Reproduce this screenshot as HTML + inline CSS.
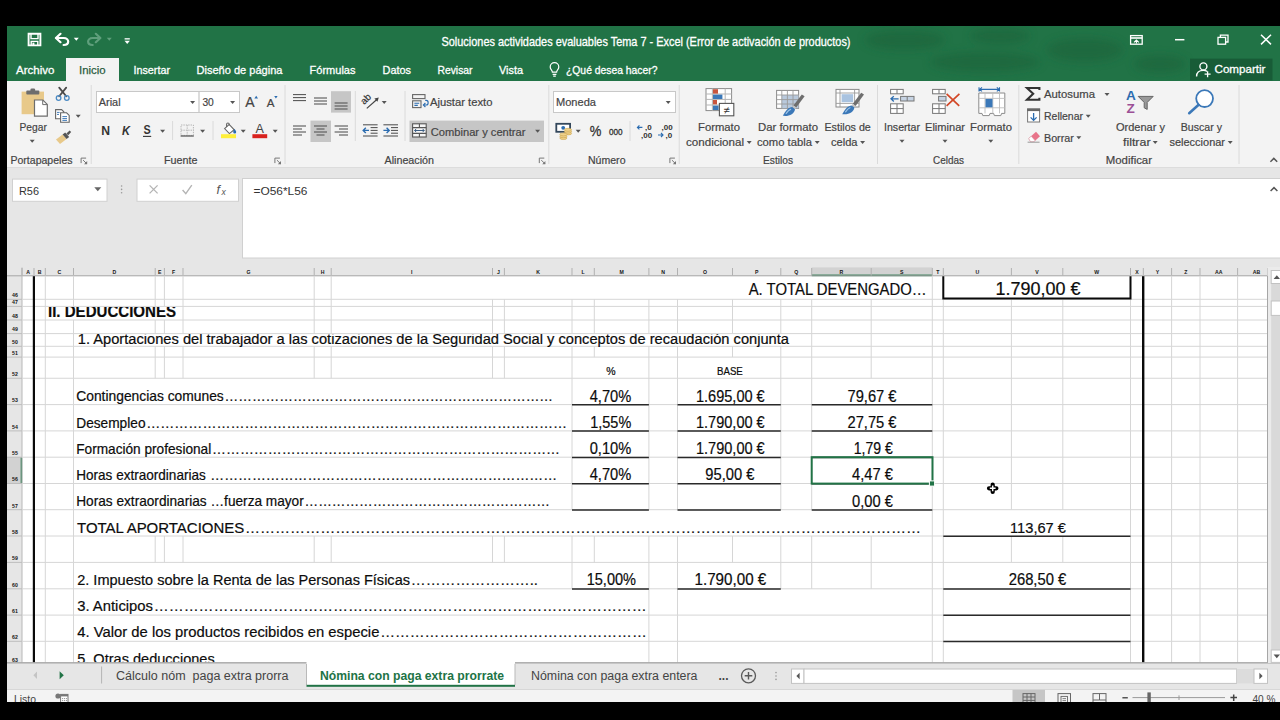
<!DOCTYPE html>
<html lang="es"><head><meta charset="utf-8"><title>Soluciones actividades evaluables Tema 7 - Excel</title>
<style>
html,body{margin:0;padding:0;background:#000;width:1280px;height:720px;overflow:hidden}
body{font-family:"Liberation Sans","DejaVu Sans",sans-serif;position:relative}
#app{position:absolute;left:0;top:0;width:1280px;height:720px;overflow:hidden}
#app>div{position:absolute;overflow:hidden}
svg text{font-family:"Liberation Sans","DejaVu Sans",sans-serif;white-space:pre}
#titlebar{left:7px;top:26px;width:1273px;height:55px;background:#217346}
#ribbon{left:7px;top:81px;width:1273px;height:87px;background:#f3f3f3}
#formulabar{left:7px;top:168px;width:1273px;height:99px;background:#e6e6e6}
#sheet{left:7px;top:267px;width:1273px;height:396px;background:#fff}
#tabsbar{left:7px;top:663px;width:1273px;height:26px;background:#e6e6e6}
#statusbar{left:7px;top:689px;width:1273px;height:13px;background:#f3f3f3}
</style></head>
<body>
<div id="app">
<div id="titlebar"><svg width="1273" height="55" viewBox="7 26 1273 55" style="position:absolute;left:0;top:0;display:block">
<defs><filter id="bl" x="-20%" y="-50%" width="140%" height="200%"><feGaussianBlur stdDeviation="4"/></filter></defs><g fill="#1b633b" opacity="0.6" filter="url(#bl)"><ellipse cx="905" cy="40" rx="40" ry="10"/><ellipse cx="1000" cy="36" rx="30" ry="8"/><ellipse cx="985" cy="62" rx="55" ry="10"/><ellipse cx="1085" cy="50" rx="38" ry="12"/><ellipse cx="1160" cy="64" rx="26" ry="9"/></g>
<rect x="66" y="58" width="53" height="23.5" fill="#f3f3f3"/>
<g fill="none" stroke="#fff" stroke-width="1.9"><path d="M28.6 33.8h11.8v11.6h-11.8z"/><path d="M31 34v4.6h7v-4.6" stroke-width="1.4"/><path d="M31.2 45v-3.6h6.6v3.6" stroke-width="1.4"/></g>
<rect x="32.4" y="42.6" width="2" height="2.6" fill="#fff"/>
<g fill="none" stroke="#fff" stroke-width="2.2" stroke-linecap="round" stroke-linejoin="round"><path d="M60.5 33.8l-4.6 4.2 4.6 4.2"/><path d="M56.4 38h7.2c3.2 0 4.6 2 4.6 3.6 0 2-1.8 3.4-4.6 3.4"/></g>
<path d="M73.8 37.7h5l-2.5 3z" fill="#fff"/>
<g fill="none" stroke="#5f9f7c" stroke-width="2.2" stroke-linecap="round" stroke-linejoin="round"><path d="M95.8 33.8l4.6 4.2-4.6 4.2"/><path d="M99.9 38h-7.2c-3.2 0-4.6 2-4.6 3.6 0 2 1.8 3.4 4.6 3.4"/></g>
<path d="M106.8 37.7h5l-2.5 3z" fill="#5f9f7c"/>
<rect x="124.6" y="38.2" width="5.2" height="1.3" fill="#fff"/>
<path d="M124.5 40.7h5.4l-2.7 3.2z" fill="#fff"/>
<text x="441.5" y="46" font-size="12.2" textLength="409" lengthAdjust="spacingAndGlyphs" fill="#fff" stroke="#fff" stroke-width="0.3">Soluciones actividades evaluables Tema 7 - Excel (Error de activación de productos)</text>
<g fill="none" stroke="#fff" stroke-width="1.3"><rect x="1130.6" y="35.6" width="11.6" height="8.6"/><path d="M1130.6 38h11.6" stroke-width="1.6"/><path d="M1134 42.4l2.4-2.4 2.4 2.4M1136.4 40v3.6" stroke-width="1.1"/><path d="M1175 39.7h9.4" stroke-width="1.5"/><rect x="1218" y="37.4" width="7.6" height="6.8"/><path d="M1220.4 37.4v-2.2h7.6v6.8h-2.4"/><path d="M1261 34.8l10 9.6M1271 34.8l-10 9.6" stroke-width="1.5"/></g>
<text x="16" y="73.6" font-size="11.8" textLength="38.4" lengthAdjust="spacingAndGlyphs" fill="#fff" stroke="#fff" stroke-width="0.3">Archivo</text>
<text x="79" y="73.6" font-size="11.8" textLength="26.6" lengthAdjust="spacingAndGlyphs" fill="#2a5c40" stroke="#2a5c40" stroke-width="0.25">Inicio</text>
<text x="133.5" y="73.6" font-size="11.8" textLength="36.5" lengthAdjust="spacingAndGlyphs" fill="#fff" stroke="#fff" stroke-width="0.3">Insertar</text>
<text x="196.5" y="73.6" font-size="11.8" textLength="86" lengthAdjust="spacingAndGlyphs" fill="#fff" stroke="#fff" stroke-width="0.3">Diseño de página</text>
<text x="309.5" y="73.6" font-size="11.8" textLength="46" lengthAdjust="spacingAndGlyphs" fill="#fff" stroke="#fff" stroke-width="0.3">Fórmulas</text>
<text x="382.5" y="73.6" font-size="11.8" textLength="28.5" lengthAdjust="spacingAndGlyphs" fill="#fff" stroke="#fff" stroke-width="0.3">Datos</text>
<text x="437.5" y="73.6" font-size="11.8" textLength="35" lengthAdjust="spacingAndGlyphs" fill="#fff" stroke="#fff" stroke-width="0.3">Revisar</text>
<text x="499" y="73.6" font-size="11.8" textLength="24" lengthAdjust="spacingAndGlyphs" fill="#fff" stroke="#fff" stroke-width="0.3">Vista</text>
<g fill="none" stroke="#fff" stroke-width="1.2"><path d="M552.4 72.2c0-2-2.2-2.6-2.2-5.2a4.3 4.3 0 0 1 8.6 0c0 2.6-2.2 3.2-2.2 5.2z"/><path d="M552.6 74.4h3.8M553.2 76.2h2.6"/></g>
<text x="566" y="73.6" font-size="11.8" textLength="91.5" lengthAdjust="spacingAndGlyphs" fill="#fff" stroke="#fff" stroke-width="0.3">¿Qué desea hacer?</text>
<rect x="1190" y="58.6" width="82.5" height="21.8" fill="#185c37"/>
<g fill="none" stroke="#fff" stroke-width="1.4"><circle cx="1203.4" cy="66.4" r="3.5"/><path d="M1196.6 76.4c0-4 3-6 6.8-6 1.6 0 2.6.3 3.6.9"/><path d="M1207.6 71.2v6M1204.6 74.2h6" stroke-width="1.3"/></g>
<text x="1214.5" y="73.4" font-size="11.8" textLength="51" lengthAdjust="spacingAndGlyphs" fill="#fff" stroke="#fff" stroke-width="0.3">Compartir</text>
</svg></div>
<div id="ribbon"><svg width="1273" height="87" viewBox="7 81 1273 87" style="position:absolute;left:0;top:0;display:block">
<rect x="7" y="167" width="1273" height="1" fill="#dcdcdc"/>
<rect x="21.6" y="91.6" width="22.4" height="22.6" fill="#e8c98a"/>
<rect x="26.3" y="90.6" width="13" height="4" fill="#6d6d6d" rx=".8"/>
<rect x="30.4" y="88.4" width="4.8" height="3.2" fill="#6d6d6d" rx="1.4"/>
<path d="M34.5 100h8.4l4.4 4.4v11.8h-12.8z" fill="#fff" stroke="#6d6d6d" stroke-width="1.2"/>
<path d="M42.7 100.2v4.4h4.4" fill="none" stroke="#6d6d6d" stroke-width="1"/>
<text x="19.5" y="131.2" font-size="11.6" textLength="27.3" lengthAdjust="spacingAndGlyphs" fill="#444" stroke="#444" stroke-width="0.2">Pegar</text>
<path d="M29.7 139.7h5l-2.5 3z" fill="#555"/>
<g fill="none" stroke="#4a4a4a" stroke-width="1.8" stroke-linecap="round"><path d="M59.200 87.600l7 8.600M66.200 87.600l-7 8.600"/></g><g fill="none" stroke="#4a8ac4" stroke-width="1.3"><circle cx="58.600" cy="98" r="2.300"/><circle cx="66.800" cy="98" r="2.300"/></g>
<g fill="#fff" stroke="#666" stroke-width="1.1"><path d="M55.6 109.6h6l2.2 2.2v7h-8.2z"/><path d="M60.6 112.8h6l2.6 2.6v6.8h-8.6z"/></g><g stroke="#2b6cb0" stroke-width=".9"><path d="M62.4 116.6h4.6M62.4 118.6h4.6M62.4 120.4h4.6M57 112.4h2.6M57 114.4h2"/></g>
<path d="M75.7 114.7h5l-2.5 3z" fill="#555"/>
<g><path d="M56 139.4l6.6-5 4 4.6-6.6 5z" fill="#e8c98a"/><path d="M62.6 134.4l2.6-2 4 4.6-2.6 2z" fill="#555"/><path d="M66.4 133.4l3.2-3 1.6 1.6-3 3.2z" fill="#555"/></g>
<text x="10.5" y="163.6" font-size="11.2" textLength="62" lengthAdjust="spacingAndGlyphs" fill="#444" stroke="#444" stroke-width="0.2">Portapapeles</text>
<g fill="none" stroke="#777" stroke-width="1"><path d="M86.1 158.1h-5v5"/><path d="M83.1 160.1l3.6 3.6"/></g><path d="M87.2 161v3.2h-3.2z" fill="#777"/>
<line x1="91.2" y1="85" x2="91.2" y2="164" stroke="#dadada" stroke-width="1"/>
<rect x="96.5" y="91.5" width="102.6" height="21" fill="#fff" stroke="#c8c8c8" stroke-width="1"/>
<rect x="199.1" y="91.5" width="40.4" height="21" fill="#fff" stroke="#c8c8c8" stroke-width="1"/>
<text x="98.8" y="106.2" font-size="11.6" textLength="21.8" lengthAdjust="spacingAndGlyphs" fill="#444" stroke="#444" stroke-width="0.2">Arial</text>
<path d="M190.1 100.9h5l-2.5 3z" fill="#555"/>
<text x="202.4" y="106.2" font-size="11.6" textLength="11.4" lengthAdjust="spacingAndGlyphs" fill="#444" stroke="#444" stroke-width="0.2">30</text>
<path d="M230.1 100.9h5l-2.5 3z" fill="#555"/>
<text x="245.2" y="107.2" font-size="14" fill="#444" stroke="#444" stroke-width="0.2">A</text>
<path d="M254.4 98.4l1.8-2.6 1.8 2.6z" fill="#2b6cb0"/>
<text x="266.8" y="107.2" font-size="11.6" fill="#444" stroke="#444" stroke-width="0.2">A</text>
<path d="M274.2 96l1.7 2.4 1.7-2.4z" fill="#2b6cb0"/>
<text x="101.2" y="134.6" font-size="12.4" textLength="8.8" lengthAdjust="spacingAndGlyphs" fill="#333" font-weight="bold">N</text>
<text x="122" y="134.6" font-size="12.4" textLength="8" lengthAdjust="spacingAndGlyphs" fill="#333" font-weight="bold" font-style="italic">K</text>
<text x="143.6" y="134.2" font-size="12" textLength="7.2" lengthAdjust="spacingAndGlyphs" fill="#333" font-weight="bold">S</text>
<line x1="143" y1="136.4" x2="151.2" y2="136.4" stroke="#333" stroke-width="1.1"/>
<path d="M160.1 129.7h5l-2.5 3z" fill="#555"/>
<line x1="172.6" y1="121" x2="172.6" y2="140" stroke="#dadada" stroke-width="1"/>
<g fill="none" stroke="#b5b5b5" stroke-width="1" stroke-dasharray="1.4 1"><rect x="181" y="125" width="12.4" height="10.4"/><path d="M187.2 125v10.4M181 130.2h12.4"/></g>
<line x1="180.6" y1="136" x2="193.8" y2="136" stroke="#666" stroke-width="1.4"/>
<path d="M200.1 129.7h5l-2.5 3z" fill="#555"/>
<line x1="213" y1="121" x2="213" y2="140" stroke="#dadada" stroke-width="1"/>
<g fill="#fff" stroke="#666" stroke-width="1.1"><path d="M224.6 128.6l4.6-4.2 5 5.4-4.8 3.8z"/><path d="M226.6 127v-2.8c0-1.6 2.6-1.6 2.6 0v1.4" fill="none"/></g><path d="M234.6 129c1 1.4 1.6 2.2 1.6 3a1.5 1.5 0 0 1-3 0c0-.8.6-1.800 1.400-3z" fill="#2b6cb0"/>
<rect x="221" y="134.2" width="15" height="4" fill="#ffef3a"/>
<path d="M240.7 129.7h5l-2.5 3z" fill="#555"/>
<text x="259.8" y="133.4" font-size="12.6" text-anchor="middle" fill="#444">A</text>
<rect x="252.4" y="134.2" width="14.8" height="4" fill="#d9231f"/>
<path d="M272.7 129.7h5l-2.5 3z" fill="#555"/>
<text x="164" y="163.6" font-size="11.2" textLength="33.5" lengthAdjust="spacingAndGlyphs" fill="#444" stroke="#444" stroke-width="0.2">Fuente</text>
<g fill="none" stroke="#777" stroke-width="1"><path d="M279.9 158.1h-5v5"/><path d="M276.9 160.1l3.6 3.6"/></g><path d="M281 161v3.2h-3.2z" fill="#777"/>
<line x1="285" y1="85" x2="285" y2="164" stroke="#dadada" stroke-width="1"/>
<line x1="293" y1="94.6" x2="306" y2="94.6" stroke="#505050" stroke-width="1.05"/><line x1="293" y1="97.6" x2="306" y2="97.6" stroke="#505050" stroke-width="1.05"/><line x1="293" y1="100.6" x2="306" y2="100.6" stroke="#505050" stroke-width="1.05"/>
<line x1="314" y1="98" x2="327" y2="98" stroke="#505050" stroke-width="1.05"/><line x1="314" y1="101" x2="327" y2="101" stroke="#505050" stroke-width="1.05"/><line x1="314" y1="104" x2="327" y2="104" stroke="#505050" stroke-width="1.05"/>
<rect x="331" y="91.2" width="20" height="21.4" fill="#c6c6c6"/>
<line x1="334.6" y1="103" x2="347.6" y2="103" stroke="#505050" stroke-width="1.05"/><line x1="334.6" y1="106" x2="347.6" y2="106" stroke="#505050" stroke-width="1.05"/><line x1="334.6" y1="109" x2="347.6" y2="109" stroke="#505050" stroke-width="1.05"/>
<g transform="rotate(-45 367 100)"><text x="361.4" y="101.6" font-size="9.6" fill="#333" stroke="#333" stroke-width="0.2">ab</text></g>
<path d="M366.800 108.400l10.600-9.400" fill="none" stroke="#444" stroke-width="1.2"/><path d="M378.800 97.600l-4.400.8 3 3.400z" fill="#444"/>
<path d="M381.7 100.9h5l-2.5 3z" fill="#555"/>
<line x1="405" y1="91" x2="405" y2="141" stroke="#dadada" stroke-width="1"/>
<g fill="none" stroke="#666" stroke-width="1.1"><rect x="412.600" y="94.600" width="12.400" height="4"/><rect x="412.600" y="100.800" width="8.400" height="6.800"/></g><g stroke="#2b6cb0" stroke-width="1.1" fill="none"><path d="M414.400 103.200h4.800M414.400 105.400h3.400"/><path d="M425.200 100.400h1c2.600 0 2.600 4.600 0 4.600h-2.600"/><path d="M425.400 103l-2 2 2 2"/></g>
<text x="430" y="106.2" font-size="11.6" textLength="62.5" lengthAdjust="spacingAndGlyphs" fill="#444" stroke="#444" stroke-width="0.2">Ajustar texto</text>
<line x1="293" y1="126" x2="306" y2="126" stroke="#505050" stroke-width="1.05"/><line x1="293" y1="132" x2="306" y2="132" stroke="#505050" stroke-width="1.05"/>
<line x1="293" y1="129" x2="302" y2="129" stroke="#505050" stroke-width="1.05"/><line x1="293" y1="135" x2="302" y2="135" stroke="#505050" stroke-width="1.05"/>
<rect x="310.5" y="120.6" width="20.5" height="21.4" fill="#c6c6c6"/>
<line x1="314" y1="126" x2="327" y2="126" stroke="#505050" stroke-width="1.05"/><line x1="314" y1="132" x2="327" y2="132" stroke="#505050" stroke-width="1.05"/>
<line x1="316.5" y1="129" x2="324.5" y2="129" stroke="#505050" stroke-width="1.05"/><line x1="316.5" y1="135" x2="324.5" y2="135" stroke="#505050" stroke-width="1.05"/>
<line x1="334.6" y1="126" x2="348" y2="126" stroke="#505050" stroke-width="1.05"/><line x1="334.6" y1="132" x2="348" y2="132" stroke="#505050" stroke-width="1.05"/>
<line x1="339" y1="129" x2="348" y2="129" stroke="#505050" stroke-width="1.05"/><line x1="339" y1="135" x2="348" y2="135" stroke="#505050" stroke-width="1.05"/>
<line x1="355.3" y1="91" x2="355.3" y2="141" stroke="#dadada" stroke-width="1"/>
<line x1="363" y1="124.8" x2="377.6" y2="124.8" stroke="#505050" stroke-width="1.05"/><line x1="363" y1="136" x2="377.6" y2="136" stroke="#505050" stroke-width="1.05"/>
<line x1="370.6" y1="127.6" x2="377.6" y2="127.6" stroke="#505050" stroke-width="1.05"/><line x1="370.6" y1="130.4" x2="377.6" y2="130.4" stroke="#505050" stroke-width="1.05"/><line x1="370.6" y1="133.2" x2="377.6" y2="133.2" stroke="#505050" stroke-width="1.05"/>
<path d="M363.200 130.400h5.800M365.800 127.800l-2.600 2.600 2.600 2.600" fill="none" stroke="#2b6cb0" stroke-width="1.4"/>
<line x1="383.4" y1="124.8" x2="398" y2="124.8" stroke="#505050" stroke-width="1.05"/><line x1="383.4" y1="136" x2="398" y2="136" stroke="#505050" stroke-width="1.05"/>
<line x1="391" y1="127.6" x2="398" y2="127.6" stroke="#505050" stroke-width="1.05"/><line x1="391" y1="130.4" x2="398" y2="130.4" stroke="#505050" stroke-width="1.05"/><line x1="391" y1="133.2" x2="398" y2="133.2" stroke="#505050" stroke-width="1.05"/>
<path d="M383.400 130.400h5.800M386.600 127.800l2.600 2.600-2.600 2.600" fill="none" stroke="#2b6cb0" stroke-width="1.4"/>
<rect x="409.5" y="120.6" width="134.5" height="21.4" fill="#c6c6c6"/>
<g fill="#f6f6f6" stroke="#555" stroke-width="1.1"><rect x="412.600" y="123.800" width="13.600" height="13.200"/><path d="M412.600 127.600h13.600M412.600 133.400h13.600M419.400 123.800v3.800M419.400 133.400v3.600"/></g><path d="M414.600 130.500h9.600M416.200 128.900l-1.600 1.600 1.600 1.600M422.600 128.900l1.600 1.600-1.600 1.600" fill="none" stroke="#3d5f85" stroke-width="1"/>
<text x="430.8" y="135.6" font-size="11.6" textLength="94.7" lengthAdjust="spacingAndGlyphs" fill="#444" stroke="#444" stroke-width="0.2">Combinar y centrar</text>
<path d="M535.1 129.7h5l-2.5 3z" fill="#555"/>
<text x="384.5" y="163.6" font-size="11.2" textLength="49.5" lengthAdjust="spacingAndGlyphs" fill="#444" stroke="#444" stroke-width="0.2">Alineación</text>
<g fill="none" stroke="#777" stroke-width="1"><path d="M544.3 158.1h-5v5"/><path d="M541.3 160.1l3.6 3.6"/></g><path d="M545.4 161v3.2h-3.2z" fill="#777"/>
<line x1="548.8" y1="85" x2="548.8" y2="164" stroke="#dadada" stroke-width="1"/>
<rect x="553.5" y="91.5" width="122" height="21" fill="#fff" stroke="#c8c8c8" stroke-width="1"/>
<text x="556" y="106.2" font-size="11.6" textLength="40" lengthAdjust="spacingAndGlyphs" fill="#444" stroke="#444" stroke-width="0.2">Moneda</text>
<path d="M665.7 100.9h5l-2.5 3z" fill="#555"/>
<g><rect x="556.300" y="123.800" width="13.800" height="8" fill="#fff" stroke="#33475b" stroke-width="1.800"/><circle cx="563.200" cy="127.800" r="1.900" fill="#2b6cb0"/><ellipse cx="568" cy="133.4" rx="3.600" ry="1.500" fill="#f0d28c" stroke="#c9a24e" stroke-width=".6"/><ellipse cx="568" cy="131.6" rx="3.600" ry="1.500" fill="#f0d28c" stroke="#c9a24e" stroke-width=".6"/><ellipse cx="568" cy="129.8" rx="3.600" ry="1.500" fill="#f0d28c" stroke="#c9a24e" stroke-width=".6"/><ellipse cx="563.4" cy="138" rx="3.600" ry="1.500" fill="#f0d28c" stroke="#c9a24e" stroke-width=".6"/><ellipse cx="563.4" cy="136.2" rx="3.600" ry="1.500" fill="#f0d28c" stroke="#c9a24e" stroke-width=".6"/><ellipse cx="563.4" cy="134.4" rx="3.600" ry="1.500" fill="#f0d28c" stroke="#c9a24e" stroke-width=".6"/></g>
<path d="M575.7 129.7h5l-2.5 3z" fill="#555"/>
<text x="589.8" y="136.2" font-size="14" textLength="11.6" lengthAdjust="spacingAndGlyphs" fill="#333" stroke="#333" stroke-width="0.3">%</text>
<text x="609" y="134.6" font-size="9.6" textLength="13.6" lengthAdjust="spacingAndGlyphs" fill="#333" stroke="#333" stroke-width="0.35">000</text>
<line x1="630" y1="121" x2="630" y2="141" stroke="#dadada" stroke-width="1"/>
<text x="645" y="130.2" font-size="8" fill="#333" font-weight="bold">,0</text><text x="641" y="137.6" font-size="8" fill="#333" font-weight="bold">,00</text>
<path d="M637.400 127.400h5M639.400 125.400l-2 2 2 2" fill="none" stroke="#2b6cb0" stroke-width="1.1"/>
<text x="661.6" y="130.2" font-size="8" fill="#333" font-weight="bold">,00</text><text x="665.6" y="137.6" font-size="8" fill="#333" font-weight="bold">,0</text>
<path d="M658 135h5M661 133l2 2-2 2" fill="none" stroke="#2b6cb0" stroke-width="1.1"/>
<text x="588" y="163.6" font-size="11.2" textLength="37.5" lengthAdjust="spacingAndGlyphs" fill="#444" stroke="#444" stroke-width="0.2">Número</text>
<g fill="none" stroke="#777" stroke-width="1"><path d="M674.9 158.1h-5v5"/><path d="M671.9 160.1l3.6 3.6"/></g><path d="M676 161v3.2h-3.2z" fill="#777"/>
<line x1="679.2" y1="85" x2="679.2" y2="164" stroke="#dadada" stroke-width="1"/>
<g><rect x="706" y="88.600" width="25.600" height="22" fill="#fff" stroke="#8a8a8a" stroke-width="1"/><path d="M706 94h25.600M706 99.400h25.600M706 105h25.600M712.400 88.600v22M725.200 88.600v22" stroke="#b5b5b5" stroke-width="1" fill="none"/><rect x="713" y="89.200" width="5" height="4.400" fill="#c8553d"/><rect x="713" y="94.600" width="9.400" height="4.400" fill="#3b78b8"/><rect x="713" y="100" width="4" height="4.400" fill="#c8553d"/><rect x="713" y="105.600" width="5.600" height="4.400" fill="#3b78b8"/><rect x="719.400" y="103.400" width="14.400" height="12.400" fill="#fff" stroke="#555" stroke-width="1.1"/></g>
<text x="726.6" y="113.6" font-size="11" text-anchor="middle" fill="#333">≠</text>
<text x="698" y="131.2" font-size="11.6" textLength="42" lengthAdjust="spacingAndGlyphs" fill="#444" stroke="#444" stroke-width="0.2">Formato</text>
<text x="686" y="146.2" font-size="11.6" textLength="58" lengthAdjust="spacingAndGlyphs" fill="#444" stroke="#444" stroke-width="0.2">condicional</text>
<path d="M746.7 140.9h5l-2.5 3z" fill="#555"/>
<g><rect x="776.600" y="90.400" width="22" height="18" fill="#fff" stroke="#8a8a8a" stroke-width="1"/><rect x="781.800" y="95" width="16.600" height="13.200" fill="#b9c9dc"/><path d="M776.600 95h22M776.600 99.600h22M776.600 104h22M781.800 90.400v18M787.400 90.400v18M793 90.400v18" stroke="#9a9a9a" stroke-width=".9" fill="none"/><g transform="translate(0 0)"><path d="M804.600 96.200l-2.800-1.800-8.400 11 2.800 2.200z" fill="#6e6e6e"/><path d="M793.400 105.400l2.800 2.200-1.200 1.600-2.800-2.100z" fill="#c4c4c4"/><path d="M792.200 107.100c-3.600.3-6.200 2.900-9.400 8.700 6.200.8 11.600-1.800 12.200-6.600z" fill="#3b78b8"/><path d="M790.600 109.400c-1.600.6-3 2-4.400 4" fill="none" stroke="#9cc3e6" stroke-width="1.2" stroke-linecap="round"/></g></g>
<text x="758" y="131.2" font-size="11.6" textLength="60" lengthAdjust="spacingAndGlyphs" fill="#444" stroke="#444" stroke-width="0.2">Dar formato</text>
<text x="757" y="146.2" font-size="11.6" textLength="55" lengthAdjust="spacingAndGlyphs" fill="#444" stroke="#444" stroke-width="0.2">como tabla</text>
<path d="M814.7 140.9h5l-2.5 3z" fill="#555"/>
<g><rect x="836" y="89.400" width="23" height="17.600" fill="#fff" stroke="#8a8a8a" stroke-width="1"/><path d="M836 93h23M836 103.400h23M840 89.400v17.600M854.600 89.400v17.600" stroke="#9a9a9a" stroke-width=".9" fill="none"/><rect x="841.600" y="94.200" width="11.600" height="8" fill="#a9c3e0"/><g transform="translate(59.4 -1.6)"><path d="M804.600 96.200l-2.800-1.800-8.400 11 2.800 2.200z" fill="#6e6e6e"/><path d="M793.400 105.400l2.800 2.200-1.200 1.600-2.800-2.100z" fill="#c4c4c4"/><path d="M792.200 107.100c-3.600.3-6.200 2.900-9.400 8.700 6.200.8 11.600-1.800 12.200-6.600z" fill="#3b78b8"/><path d="M790.600 109.400c-1.600.6-3 2-4.400 4" fill="none" stroke="#9cc3e6" stroke-width="1.2" stroke-linecap="round"/></g></g>
<text x="824.5" y="131.2" font-size="11.6" textLength="46.3" lengthAdjust="spacingAndGlyphs" fill="#444" stroke="#444" stroke-width="0.2">Estilos de</text>
<text x="831" y="146.2" font-size="11.6" textLength="26.5" lengthAdjust="spacingAndGlyphs" fill="#444" stroke="#444" stroke-width="0.2">celda</text>
<path d="M860.1 140.9h5l-2.5 3z" fill="#555"/>
<text x="763" y="163.6" font-size="11.2" textLength="30" lengthAdjust="spacingAndGlyphs" fill="#444" stroke="#444" stroke-width="0.2">Estilos</text>
<line x1="877.5" y1="85" x2="877.5" y2="164" stroke="#dadada" stroke-width="1"/>
<g fill="#fff" stroke="#777" stroke-width="1"><rect x="890.600" y="89.400" width="12.600" height="4.400"/><path d="M897 89.400v4.400"/><rect x="890.600" y="103.800" width="12.600" height="9.600"/><path d="M897 103.800v9.600M890.600 108.600h12.600"/><rect x="900.600" y="96.400" width="13.400" height="4.600" fill="#c6d3e3"/><path d="M907.200 96.400v4.600"/></g><path d="M891 98.800h7.600M893.800 96.200l-2.800 2.600 2.800 2.600" fill="none" stroke="#2b6cb0" stroke-width="1.3"/>
<text x="884" y="131.2" font-size="11.6" textLength="36" lengthAdjust="spacingAndGlyphs" fill="#444" stroke="#444" stroke-width="0.2">Insertar</text>
<path d="M899.5 139.7h5l-2.5 3z" fill="#555"/>
<g fill="#fff" stroke="#777" stroke-width="1"><rect x="932.600" y="89.400" width="12.600" height="4.400"/><path d="M939 89.400v4.400"/><rect x="932.600" y="103.800" width="12.600" height="9.600"/><path d="M939 103.800v9.600M932.600 108.600h12.600"/><rect x="938.600" y="96.400" width="7.400" height="4.600" fill="#c6d3e3"/></g><path d="M946.600 93.800l12.600 12M959.400 93.800l-12.800 12" fill="none" stroke="#d24726" stroke-width="1.7"/>
<text x="925" y="131.2" font-size="11.6" textLength="40" lengthAdjust="spacingAndGlyphs" fill="#444" stroke="#444" stroke-width="0.2">Eliminar</text>
<path d="M942.5 139.7h5l-2.5 3z" fill="#555"/>
<g><path d="M979.400 89.400h19.800M979 87.200v4.400M999.500 87.200v4.400M982 87.400l-2.400 2 2.400 2M996.800 87.400l2.400 2-2.400 2" fill="none" stroke="#2b6cb0" stroke-width="1.1"/><path d="M978.800 93h26v20.400h-3.200l-.8 2.200h-6.400l-.8-2.200h-3.600l-.8 2.200h-6.400l-.8-2.200h-3.200z" fill="#fff" stroke="#8a8a8a" stroke-width="1"/><path d="M978.800 98.400h26M978.800 107.800h26M985 93v20.400M992.800 93v20.400M999.500 93v20.400" stroke="#bdbdbd" stroke-width=".9" fill="none"/><rect x="985.500" y="98.900" width="7" height="8.400" fill="#3b78b8"/></g>
<text x="970" y="131.2" font-size="11.6" textLength="42" lengthAdjust="spacingAndGlyphs" fill="#444" stroke="#444" stroke-width="0.2">Formato</text>
<path d="M988.3 139.7h5l-2.5 3z" fill="#555"/>
<text x="933" y="163.6" font-size="11.2" textLength="31" lengthAdjust="spacingAndGlyphs" fill="#444" stroke="#444" stroke-width="0.2">Celdas</text>
<line x1="1018.8" y1="85" x2="1018.8" y2="164" stroke="#dadada" stroke-width="1"/>
<path d="M1039.400 90v-2h-12.400l6.200 5.800-6.200 6h12.400v-2" fill="none" stroke="#333" stroke-width="2.1"/>
<text x="1044" y="98.2" font-size="11.6" textLength="51" lengthAdjust="spacingAndGlyphs" fill="#444" stroke="#444" stroke-width="0.2">Autosuma</text>
<path d="M1104.5 92.9h5l-2.5 3z" fill="#555"/>
<g><rect x="1027.600" y="109" width="12" height="13" fill="#fff" stroke="#777" stroke-width="1"/><rect x="1027.100" y="108.500" width="13" height="2.600" fill="#666"/><path d="M1033.600 113v7M1030.600 117.400l3 3 3-3" fill="none" stroke="#2b6cb0" stroke-width="1.3"/></g>
<text x="1044" y="120" font-size="11.6" textLength="39" lengthAdjust="spacingAndGlyphs" fill="#444" stroke="#444" stroke-width="0.2">Rellenar</text>
<path d="M1085.7 114.7h5l-2.5 3z" fill="#555"/>
<g><path d="M1028.600 138.600l7.400-6.800 4 4.400-6 5.600h-3.400z" fill="#e8748a"/><path d="M1028.600 138.600l2.600-2.400 3.800 4.200-1.400 1.400h-3z" fill="#fff" stroke="#d8a0aa" stroke-width=".7"/><path d="M1027.600 142.200h12" stroke="#999" stroke-width="1"/></g>
<text x="1044" y="141.6" font-size="11.6" textLength="29.8" lengthAdjust="spacingAndGlyphs" fill="#444" stroke="#444" stroke-width="0.2">Borrar</text>
<path d="M1076.3 136.3h5l-2.5 3z" fill="#555"/>
<text x="1126" y="100.4" font-size="13.6" fill="#2b6cb0" font-weight="bold">A</text>
<text x="1126.6" y="113.4" font-size="13.6" fill="#9b4f96" font-weight="bold">Z</text>
<path d="M1138.200 96.400h15l-6 6v7l-3-1.600v-5.400z" fill="#999" stroke="#666" stroke-width="1"/>
<text x="1116" y="131.2" font-size="11.6" textLength="49" lengthAdjust="spacingAndGlyphs" fill="#444" stroke="#444" stroke-width="0.2">Ordenar y</text>
<text x="1123" y="146.2" font-size="11.6" textLength="27.5" lengthAdjust="spacingAndGlyphs" fill="#444" stroke="#444" stroke-width="0.2">filtrar</text>
<path d="M1152.7 140.9h5l-2.5 3z" fill="#555"/>
<circle cx="1204.600" cy="98.600" r="8.400" fill="#fff" stroke="#3b78b8" stroke-width="1.8"/><path d="M1198.600 104.800l-9.400 8.400" stroke="#3b78b8" stroke-width="2.600" stroke-linecap="round"/>
<text x="1180.8" y="131.2" font-size="11.6" textLength="41.2" lengthAdjust="spacingAndGlyphs" fill="#444" stroke="#444" stroke-width="0.2">Buscar y</text>
<text x="1169.5" y="146.2" font-size="11.6" textLength="55.5" lengthAdjust="spacingAndGlyphs" fill="#444" stroke="#444" stroke-width="0.2">seleccionar</text>
<path d="M1227.7 140.9h5l-2.5 3z" fill="#555"/>
<text x="1105.8" y="163.6" font-size="11.2" textLength="46.2" lengthAdjust="spacingAndGlyphs" fill="#444" stroke="#444" stroke-width="0.2">Modificar</text>
<line x1="1239" y1="85" x2="1239" y2="164" stroke="#dadada" stroke-width="1"/>
<path d="M1270.400 161.800l3.400-3.400 3.400 3.400" fill="none" stroke="#555" stroke-width="1.5"/>
</svg></div>
<div id="formulabar"><svg width="1273" height="99" viewBox="7 168 1273 99" style="position:absolute;left:0;top:0;display:block">
<rect x="12.5" y="179.1" width="94.5" height="22.2" fill="#fff" stroke="#d0d0d0" stroke-width="1"/>
<text x="19" y="194.6" font-size="11.4" textLength="20" lengthAdjust="spacingAndGlyphs" fill="#333">R56</text>
<path d="M94.3 187.2h7l-3.5 4z" fill="#666"/>
<circle cx="121.6" cy="186" r=".8" fill="#9a9a9a"/>
<circle cx="121.6" cy="189.4" r=".8" fill="#9a9a9a"/>
<circle cx="121.6" cy="192.8" r=".8" fill="#9a9a9a"/>
<rect x="137" y="179.1" width="101.5" height="22.2" fill="#fff" stroke="#d0d0d0" stroke-width="1"/>
<path d="M149.6 185.4l8 8M157.6 185.4l-8 8" fill="none" stroke="#b4b4b4" stroke-width="1.3"/>
<path d="M182.6 190l3.2 3.6 6-8.4" fill="none" stroke="#b4b4b4" stroke-width="1.4"/>
<text x="216.6" y="194.4" font-size="12.6" fill="#555" font-style="italic" font-family='"Liberation Serif", serif'>f</text>
<text x="221.4" y="195.2" font-size="8.6" fill="#555" font-style="italic" font-family='"Liberation Serif", serif'>x</text>
<rect x="242.5" y="178.5" width="1040" height="79.5" fill="#fff" stroke="#d0d0d0" stroke-width="1"/>
<text x="253.5" y="194.6" font-size="11.4" textLength="54" lengthAdjust="spacingAndGlyphs" fill="#333">=O56*L56</text>
<path d="M1270.600 191l3.400-3.400 3.400 3.400" fill="none" stroke="#555" stroke-width="1.5"/>
</svg></div>
<div id="sheet"><svg width="1273" height="396" viewBox="7 267 1273 396" style="position:absolute;left:0;top:0;display:block">
<rect x="7" y="267" width="1273" height="9" fill="#e6e6e6"/>
<rect x="7" y="267" width="15" height="396" fill="#e6e6e6"/>
<rect x="811.7" y="267.4" width="120.6" height="8.4" fill="#d2d2d2"/>
<rect x="811.7" y="274.6" width="120.6" height="1.6" fill="#217346"/>
<rect x="7" y="457.2" width="15" height="26.3" fill="#d2d2d2"/>
<rect x="20.7" y="457.2" width="1.5" height="26.3" fill="#217346"/>
<line x1="7" y1="275.8" x2="1267.5" y2="275.8" stroke="#a6a6a6" stroke-width="1"/>
<line x1="22" y1="267.5" x2="22" y2="662.8" stroke="#b8b8b8" stroke-width="1"/>
<line x1="34" y1="268" x2="34" y2="275.6" stroke="#b1b1b1" stroke-width="1"/>
<line x1="45.3" y1="268" x2="45.3" y2="275.6" stroke="#b1b1b1" stroke-width="1"/>
<line x1="73.5" y1="268" x2="73.5" y2="275.6" stroke="#b1b1b1" stroke-width="1"/>
<line x1="155.2" y1="268" x2="155.2" y2="275.6" stroke="#b1b1b1" stroke-width="1"/>
<line x1="164.4" y1="268" x2="164.4" y2="275.6" stroke="#b1b1b1" stroke-width="1"/>
<line x1="183" y1="268" x2="183" y2="275.6" stroke="#b1b1b1" stroke-width="1"/>
<line x1="314.2" y1="268" x2="314.2" y2="275.6" stroke="#b1b1b1" stroke-width="1"/>
<line x1="331.2" y1="268" x2="331.2" y2="275.6" stroke="#b1b1b1" stroke-width="1"/>
<line x1="492.5" y1="268" x2="492.5" y2="275.6" stroke="#b1b1b1" stroke-width="1"/>
<line x1="504.4" y1="268" x2="504.4" y2="275.6" stroke="#b1b1b1" stroke-width="1"/>
<line x1="572" y1="268" x2="572" y2="275.6" stroke="#b1b1b1" stroke-width="1"/>
<line x1="594.3" y1="268" x2="594.3" y2="275.6" stroke="#b1b1b1" stroke-width="1"/>
<line x1="648.9" y1="268" x2="648.9" y2="275.6" stroke="#b1b1b1" stroke-width="1"/>
<line x1="677.5" y1="268" x2="677.5" y2="275.6" stroke="#b1b1b1" stroke-width="1"/>
<line x1="732.5" y1="268" x2="732.5" y2="275.6" stroke="#b1b1b1" stroke-width="1"/>
<line x1="780.8" y1="268" x2="780.8" y2="275.6" stroke="#b1b1b1" stroke-width="1"/>
<line x1="811.7" y1="268" x2="811.7" y2="275.6" stroke="#b1b1b1" stroke-width="1"/>
<line x1="871.2" y1="268" x2="871.2" y2="275.6" stroke="#b1b1b1" stroke-width="1"/>
<line x1="932.3" y1="268" x2="932.3" y2="275.6" stroke="#b1b1b1" stroke-width="1"/>
<line x1="943.3" y1="268" x2="943.3" y2="275.6" stroke="#b1b1b1" stroke-width="1"/>
<line x1="1011.4" y1="268" x2="1011.4" y2="275.6" stroke="#b1b1b1" stroke-width="1"/>
<line x1="1062.8" y1="268" x2="1062.8" y2="275.6" stroke="#b1b1b1" stroke-width="1"/>
<line x1="1130.5" y1="268" x2="1130.5" y2="275.6" stroke="#b1b1b1" stroke-width="1"/>
<line x1="1143.3" y1="268" x2="1143.3" y2="275.6" stroke="#b1b1b1" stroke-width="1"/>
<line x1="1171.6" y1="268" x2="1171.6" y2="275.6" stroke="#b1b1b1" stroke-width="1"/>
<line x1="1200" y1="268" x2="1200" y2="275.6" stroke="#b1b1b1" stroke-width="1"/>
<line x1="1237.6" y1="268" x2="1237.6" y2="275.6" stroke="#b1b1b1" stroke-width="1"/>
<line x1="1267.5" y1="268" x2="1267.5" y2="275.6" stroke="#b1b1b1" stroke-width="1"/>
<line x1="22" y1="268" x2="22" y2="275.6" stroke="#b1b1b1" stroke-width="1"/>
<g fill="#151515" font-weight="bold"><text x="28" y="274" font-size="5.2" text-anchor="middle">A</text><text x="39.65" y="274" font-size="5.2" text-anchor="middle">B</text><text x="59.4" y="274" font-size="5.2" text-anchor="middle">C</text><text x="114.35" y="274" font-size="5.2" text-anchor="middle">D</text><text x="159.8" y="274" font-size="5.2" text-anchor="middle">E</text><text x="173.7" y="274" font-size="5.2" text-anchor="middle">F</text><text x="248.6" y="274" font-size="5.2" text-anchor="middle">G</text><text x="322.7" y="274" font-size="5.2" text-anchor="middle">H</text><text x="411.85" y="274" font-size="5.2" text-anchor="middle">I</text><text x="498.45" y="274" font-size="5.2" text-anchor="middle">J</text><text x="538.2" y="274" font-size="5.2" text-anchor="middle">K</text><text x="583.15" y="274" font-size="5.2" text-anchor="middle">L</text><text x="621.6" y="274" font-size="5.2" text-anchor="middle">M</text><text x="663.2" y="274" font-size="5.2" text-anchor="middle">N</text><text x="705" y="274" font-size="5.2" text-anchor="middle">O</text><text x="756.65" y="274" font-size="5.2" text-anchor="middle">P</text><text x="796.25" y="274" font-size="5.2" text-anchor="middle">Q</text><text x="841.45" y="274" font-size="5.2" text-anchor="middle">R</text><text x="901.75" y="274" font-size="5.2" text-anchor="middle">S</text><text x="937.8" y="274" font-size="5.2" text-anchor="middle">T</text><text x="977.35" y="274" font-size="5.2" text-anchor="middle">U</text><text x="1037.1" y="274" font-size="5.2" text-anchor="middle">V</text><text x="1096.65" y="274" font-size="5.2" text-anchor="middle">W</text><text x="1136.9" y="274" font-size="5.2" text-anchor="middle">X</text><text x="1157.45" y="274" font-size="5.2" text-anchor="middle">Y</text><text x="1185.8" y="274" font-size="5.2" text-anchor="middle">Z</text><text x="1218.8" y="274" font-size="5.2" text-anchor="middle">AA</text><text x="1256.55" y="274" font-size="5.2" text-anchor="middle">AB</text></g>
<line x1="7" y1="299.3" x2="22" y2="299.3" stroke="#bdbdbd" stroke-width="1"/>
<line x1="7" y1="306.4" x2="22" y2="306.4" stroke="#bdbdbd" stroke-width="1"/>
<line x1="7" y1="320" x2="22" y2="320" stroke="#bdbdbd" stroke-width="1"/>
<line x1="7" y1="333.6" x2="22" y2="333.6" stroke="#bdbdbd" stroke-width="1"/>
<line x1="7" y1="346.3" x2="22" y2="346.3" stroke="#bdbdbd" stroke-width="1"/>
<line x1="7" y1="357.1" x2="22" y2="357.1" stroke="#bdbdbd" stroke-width="1"/>
<line x1="7" y1="378.25" x2="22" y2="378.25" stroke="#bdbdbd" stroke-width="1"/>
<line x1="7" y1="404.6" x2="22" y2="404.6" stroke="#bdbdbd" stroke-width="1"/>
<line x1="7" y1="430.9" x2="22" y2="430.9" stroke="#bdbdbd" stroke-width="1"/>
<line x1="7" y1="457.2" x2="22" y2="457.2" stroke="#bdbdbd" stroke-width="1"/>
<line x1="7" y1="483.5" x2="22" y2="483.5" stroke="#bdbdbd" stroke-width="1"/>
<line x1="7" y1="509.7" x2="22" y2="509.7" stroke="#bdbdbd" stroke-width="1"/>
<line x1="7" y1="536" x2="22" y2="536" stroke="#bdbdbd" stroke-width="1"/>
<line x1="7" y1="562.4" x2="22" y2="562.4" stroke="#bdbdbd" stroke-width="1"/>
<line x1="7" y1="588.8" x2="22" y2="588.8" stroke="#bdbdbd" stroke-width="1"/>
<line x1="7" y1="615.1" x2="22" y2="615.1" stroke="#bdbdbd" stroke-width="1"/>
<line x1="7" y1="641.3" x2="22" y2="641.3" stroke="#bdbdbd" stroke-width="1"/>
<g fill="#151515" font-weight="bold"><text x="15" y="297.1" font-size="5.2" text-anchor="middle">46</text><text x="15" y="304.2" font-size="5.2" text-anchor="middle">47</text><text x="15" y="317.8" font-size="5.2" text-anchor="middle">48</text><text x="15" y="331.4" font-size="5.2" text-anchor="middle">49</text><text x="15" y="344.1" font-size="5.2" text-anchor="middle">50</text><text x="15" y="354.9" font-size="5.2" text-anchor="middle">51</text><text x="15" y="376.05" font-size="5.2" text-anchor="middle">52</text><text x="15" y="402.4" font-size="5.2" text-anchor="middle">53</text><text x="15" y="428.7" font-size="5.2" text-anchor="middle">54</text><text x="15" y="455" font-size="5.2" text-anchor="middle">55</text><text x="15" y="481.3" font-size="5.2" text-anchor="middle">56</text><text x="15" y="507.5" font-size="5.2" text-anchor="middle">57</text><text x="15" y="533.8" font-size="5.2" text-anchor="middle">58</text><text x="15" y="560.2" font-size="5.2" text-anchor="middle">59</text><text x="15" y="586.6" font-size="5.2" text-anchor="middle">60</text><text x="15" y="612.9" font-size="5.2" text-anchor="middle">61</text><text x="15" y="639.1" font-size="5.2" text-anchor="middle">62</text><text x="15" y="662.3" font-size="5.2" text-anchor="middle">63</text></g>
<path d="M22 299.3H1267.5M22 306.4H1267.5M22 320H1267.5M22 333.6H1267.5M22 346.3H1267.5M22 357.1H1267.5M22 378.25H1267.5M22 404.6H1267.5M22 430.9H1267.5M22 457.2H1267.5M22 483.5H1267.5M22 509.7H1267.5M22 536H1267.5M22 562.4H1267.5M22 588.8H1267.5M22 615.1H1267.5M22 641.3H1267.5M34 275.8V299.3M45.3 275.8V299.3M73.5 275.8V299.3M155.2 275.8V299.3M164.4 275.8V299.3M183 275.8V299.3M314.2 275.8V299.3M331.2 275.8V299.3M932.3 275.8V299.3M943.3 275.8V299.3M1130.5 275.8V299.3M1143.3 275.8V299.3M1171.6 275.8V299.3M1200 275.8V299.3M1237.6 275.8V299.3M34 299.3V306.4M45.3 299.3V306.4M73.5 299.3V306.4M155.2 299.3V306.4M164.4 299.3V306.4M183 299.3V306.4M314.2 299.3V306.4M331.2 299.3V306.4M492.5 299.3V306.4M504.4 299.3V306.4M572 299.3V306.4M594.3 299.3V306.4M648.9 299.3V306.4M677.5 299.3V306.4M732.5 299.3V306.4M780.8 299.3V306.4M811.7 299.3V306.4M871.2 299.3V306.4M932.3 299.3V306.4M943.3 299.3V306.4M1011.4 299.3V306.4M1062.8 299.3V306.4M1130.5 299.3V306.4M1143.3 299.3V306.4M1171.6 299.3V306.4M1200 299.3V306.4M1237.6 299.3V306.4M34 306.4V320M45.3 306.4V320M183 306.4V320M314.2 306.4V320M331.2 306.4V320M492.5 306.4V320M504.4 306.4V320M572 306.4V320M594.3 306.4V320M648.9 306.4V320M677.5 306.4V320M732.5 306.4V320M780.8 306.4V320M811.7 306.4V320M871.2 306.4V320M932.3 306.4V320M943.3 306.4V320M1011.4 306.4V320M1062.8 306.4V320M1130.5 306.4V320M1143.3 306.4V320M1171.6 306.4V320M1200 306.4V320M1237.6 306.4V320M34 320V333.6M45.3 320V333.6M73.5 320V333.6M155.2 320V333.6M164.4 320V333.6M183 320V333.6M314.2 320V333.6M331.2 320V333.6M492.5 320V333.6M504.4 320V333.6M572 320V333.6M594.3 320V333.6M648.9 320V333.6M677.5 320V333.6M732.5 320V333.6M780.8 320V333.6M811.7 320V333.6M871.2 320V333.6M932.3 320V333.6M943.3 320V333.6M1011.4 320V333.6M1062.8 320V333.6M1130.5 320V333.6M1143.3 320V333.6M1171.6 320V333.6M1200 320V333.6M1237.6 320V333.6M34 333.6V346.3M45.3 333.6V346.3M73.5 333.6V346.3M811.7 333.6V346.3M871.2 333.6V346.3M932.3 333.6V346.3M943.3 333.6V346.3M1011.4 333.6V346.3M1062.8 333.6V346.3M1130.5 333.6V346.3M1143.3 333.6V346.3M1171.6 333.6V346.3M1200 333.6V346.3M1237.6 333.6V346.3M34 346.3V357.1M45.3 346.3V357.1M73.5 346.3V357.1M155.2 346.3V357.1M164.4 346.3V357.1M183 346.3V357.1M314.2 346.3V357.1M331.2 346.3V357.1M492.5 346.3V357.1M504.4 346.3V357.1M572 346.3V357.1M594.3 346.3V357.1M648.9 346.3V357.1M677.5 346.3V357.1M732.5 346.3V357.1M780.8 346.3V357.1M811.7 346.3V357.1M871.2 346.3V357.1M932.3 346.3V357.1M943.3 346.3V357.1M1011.4 346.3V357.1M1062.8 346.3V357.1M1130.5 346.3V357.1M1143.3 346.3V357.1M1171.6 346.3V357.1M1200 346.3V357.1M1237.6 346.3V357.1M34 357.1V378.25M45.3 357.1V378.25M73.5 357.1V378.25M155.2 357.1V378.25M164.4 357.1V378.25M183 357.1V378.25M314.2 357.1V378.25M331.2 357.1V378.25M492.5 357.1V378.25M504.4 357.1V378.25M572 357.1V378.25M648.9 357.1V378.25M677.5 357.1V378.25M780.8 357.1V378.25M811.7 357.1V378.25M871.2 357.1V378.25M932.3 357.1V378.25M943.3 357.1V378.25M1011.4 357.1V378.25M1062.8 357.1V378.25M1130.5 357.1V378.25M1143.3 357.1V378.25M1171.6 357.1V378.25M1200 357.1V378.25M1237.6 357.1V378.25M34 378.25V404.6M45.3 378.25V404.6M73.5 378.25V404.6M572 378.25V404.6M648.9 378.25V404.6M677.5 378.25V404.6M780.8 378.25V404.6M811.7 378.25V404.6M932.3 378.25V404.6M943.3 378.25V404.6M1011.4 378.25V404.6M1062.8 378.25V404.6M1130.5 378.25V404.6M1143.3 378.25V404.6M1171.6 378.25V404.6M1200 378.25V404.6M1237.6 378.25V404.6M34 404.6V430.9M45.3 404.6V430.9M73.5 404.6V430.9M572 404.6V430.9M648.9 404.6V430.9M677.5 404.6V430.9M780.8 404.6V430.9M811.7 404.6V430.9M932.3 404.6V430.9M943.3 404.6V430.9M1011.4 404.6V430.9M1062.8 404.6V430.9M1130.5 404.6V430.9M1143.3 404.6V430.9M1171.6 404.6V430.9M1200 404.6V430.9M1237.6 404.6V430.9M34 430.9V457.2M45.3 430.9V457.2M73.5 430.9V457.2M572 430.9V457.2M648.9 430.9V457.2M677.5 430.9V457.2M780.8 430.9V457.2M811.7 430.9V457.2M932.3 430.9V457.2M943.3 430.9V457.2M1011.4 430.9V457.2M1062.8 430.9V457.2M1130.5 430.9V457.2M1143.3 430.9V457.2M1171.6 430.9V457.2M1200 430.9V457.2M1237.6 430.9V457.2M34 457.2V483.5M45.3 457.2V483.5M73.5 457.2V483.5M572 457.2V483.5M648.9 457.2V483.5M677.5 457.2V483.5M780.8 457.2V483.5M811.7 457.2V483.5M932.3 457.2V483.5M943.3 457.2V483.5M1011.4 457.2V483.5M1062.8 457.2V483.5M1130.5 457.2V483.5M1143.3 457.2V483.5M1171.6 457.2V483.5M1200 457.2V483.5M1237.6 457.2V483.5M34 483.5V509.7M45.3 483.5V509.7M73.5 483.5V509.7M572 483.5V509.7M648.9 483.5V509.7M677.5 483.5V509.7M780.8 483.5V509.7M811.7 483.5V509.7M932.3 483.5V509.7M943.3 483.5V509.7M1011.4 483.5V509.7M1062.8 483.5V509.7M1130.5 483.5V509.7M1143.3 483.5V509.7M1171.6 483.5V509.7M1200 483.5V509.7M1237.6 483.5V509.7M34 509.7V536M45.3 509.7V536M73.5 509.7V536M932.3 509.7V536M943.3 509.7V536M1130.5 509.7V536M1143.3 509.7V536M1171.6 509.7V536M1200 509.7V536M1237.6 509.7V536M34 536V562.4M45.3 536V562.4M73.5 536V562.4M155.2 536V562.4M164.4 536V562.4M183 536V562.4M314.2 536V562.4M331.2 536V562.4M492.5 536V562.4M504.4 536V562.4M572 536V562.4M594.3 536V562.4M648.9 536V562.4M677.5 536V562.4M732.5 536V562.4M780.8 536V562.4M811.7 536V562.4M871.2 536V562.4M932.3 536V562.4M943.3 536V562.4M1011.4 536V562.4M1062.8 536V562.4M1130.5 536V562.4M1143.3 536V562.4M1171.6 536V562.4M1200 536V562.4M1237.6 536V562.4M34 562.4V588.8M45.3 562.4V588.8M73.5 562.4V588.8M572 562.4V588.8M648.9 562.4V588.8M677.5 562.4V588.8M780.8 562.4V588.8M811.7 562.4V588.8M871.2 562.4V588.8M932.3 562.4V588.8M943.3 562.4V588.8M1130.5 562.4V588.8M1143.3 562.4V588.8M1171.6 562.4V588.8M1200 562.4V588.8M1237.6 562.4V588.8M34 588.8V615.1M45.3 588.8V615.1M73.5 588.8V615.1M648.9 588.8V615.1M677.5 588.8V615.1M932.3 588.8V615.1M943.3 588.8V615.1M1130.5 588.8V615.1M1143.3 588.8V615.1M1171.6 588.8V615.1M1200 588.8V615.1M1237.6 588.8V615.1M34 615.1V641.3M45.3 615.1V641.3M73.5 615.1V641.3M648.9 615.1V641.3M677.5 615.1V641.3M932.3 615.1V641.3M943.3 615.1V641.3M1130.5 615.1V641.3M1143.3 615.1V641.3M1171.6 615.1V641.3M1200 615.1V641.3M1237.6 615.1V641.3M34 641.3V662.8M45.3 641.3V662.8M73.5 641.3V662.8M648.9 641.3V662.8M677.5 641.3V662.8M932.3 641.3V662.8M943.3 641.3V662.8M1130.5 641.3V662.8M1143.3 641.3V662.8M1171.6 641.3V662.8M1200 641.3V662.8M1237.6 641.3V662.8" fill="none" stroke="#d6d6d6" stroke-width="1"/>
<rect x="1267.5" y="267" width="12.5" height="396" fill="#ebebeb"/>
<rect x="1271.2" y="283.5" width="9" height="366.5" fill="#d9d9d9"/>
<line x1="1267.5" y1="275.8" x2="1267.5" y2="662.8" stroke="#a6a6a6" stroke-width="1"/>
<rect x="1271.2" y="270.5" width="10" height="13" fill="#fff" stroke="#c2c2c2" stroke-width="1"/>
<path d="M1273.600 279l3.200-3.800 3.200 3.800z" fill="#555"/>
<rect x="1271.2" y="301" width="10" height="14.4" fill="#fff" stroke="#c2c2c2" stroke-width="1"/>
<rect x="1271.2" y="650" width="10" height="12.4" fill="#fff" stroke="#c2c2c2" stroke-width="1"/>
<path d="M1273.600 654.400l3.200 3.800 3.200-3.800z" fill="#555"/>
<rect x="32.8" y="276.2" width="2.2" height="386.6" fill="#0a0a0a"/>
<rect x="1142" y="276.2" width="2.4" height="386.6" fill="#0a0a0a"/>
<path d="M943.3 276.2V298.4H1130.5V276.2" fill="none" stroke="#0a0a0a" stroke-width="2"/>
<line x1="572" y1="404.8" x2="648.9" y2="404.8" stroke="#2a2a2a" stroke-width="1.5"/>
<line x1="677.5" y1="404.8" x2="780.8" y2="404.8" stroke="#2a2a2a" stroke-width="1.5"/>
<line x1="811.7" y1="404.8" x2="932.3" y2="404.8" stroke="#2a2a2a" stroke-width="1.5"/>
<line x1="572" y1="431.1" x2="648.9" y2="431.1" stroke="#2a2a2a" stroke-width="1.5"/>
<line x1="677.5" y1="431.1" x2="780.8" y2="431.1" stroke="#2a2a2a" stroke-width="1.5"/>
<line x1="811.7" y1="431.1" x2="932.3" y2="431.1" stroke="#2a2a2a" stroke-width="1.5"/>
<line x1="572" y1="457.4" x2="648.9" y2="457.4" stroke="#2a2a2a" stroke-width="1.5"/>
<line x1="677.5" y1="457.4" x2="780.8" y2="457.4" stroke="#2a2a2a" stroke-width="1.5"/>
<line x1="811.7" y1="457.4" x2="932.3" y2="457.4" stroke="#2a2a2a" stroke-width="1.5"/>
<line x1="572" y1="483.7" x2="648.9" y2="483.7" stroke="#2a2a2a" stroke-width="1.5"/>
<line x1="677.5" y1="483.7" x2="780.8" y2="483.7" stroke="#2a2a2a" stroke-width="1.5"/>
<line x1="811.7" y1="483.7" x2="932.3" y2="483.7" stroke="#2a2a2a" stroke-width="1.5"/>
<line x1="572" y1="509.9" x2="648.9" y2="509.9" stroke="#2a2a2a" stroke-width="1.5"/>
<line x1="677.5" y1="509.9" x2="780.8" y2="509.9" stroke="#2a2a2a" stroke-width="1.5"/>
<line x1="811.7" y1="509.9" x2="932.3" y2="509.9" stroke="#2a2a2a" stroke-width="1.5"/>
<line x1="572" y1="589" x2="648.9" y2="589" stroke="#2a2a2a" stroke-width="1.5"/>
<line x1="677.5" y1="589" x2="780.8" y2="589" stroke="#2a2a2a" stroke-width="1.5"/>
<line x1="943.3" y1="536.2" x2="1130.5" y2="536.2" stroke="#2a2a2a" stroke-width="1.5"/>
<line x1="943.3" y1="589" x2="1130.5" y2="589" stroke="#2a2a2a" stroke-width="1.5"/>
<line x1="943.3" y1="615.3" x2="1130.5" y2="615.3" stroke="#2a2a2a" stroke-width="1.5"/>
<line x1="943.3" y1="641.5" x2="1130.5" y2="641.5" stroke="#2a2a2a" stroke-width="1.5"/>
<clipPath id="c48"><rect x="40" y="307" width="300" height="14"/></clipPath>
<clipPath id="c50"><rect x="60" y="333.9" width="900" height="14"/></clipPath>
<clipPath id="c63"><rect x="60" y="640" width="900" height="22.4"/></clipPath>
<g fill="#0c0c0c" stroke="#0c0c0c" stroke-width=".2"><text x="748.7" y="295" font-size="15.8" textLength="178" lengthAdjust="spacingAndGlyphs">A. TOTAL DEVENGADO…</text>
<text x="995.6" y="294.5" font-size="17.5" textLength="84.8" lengthAdjust="spacingAndGlyphs">1.790,00 €</text>
<g clip-path="url(#c48)"><text x="48" y="317.3" font-size="16" textLength="128" lengthAdjust="spacingAndGlyphs" font-weight="bold">II. DEDUCCIONES</text></g>
<g clip-path="url(#c50)"><text x="77.8" y="343.7" font-size="14.9" textLength="711.2" lengthAdjust="spacingAndGlyphs">1. Aportaciones del trabajador a las cotizaciones de la Seguridad Social y conceptos de recaudación conjunta</text></g>
<text x="606.25" y="375" font-size="10.4" textLength="9.35" lengthAdjust="spacingAndGlyphs">%</text>
<text x="717" y="375" font-size="10.2" textLength="25.8" lengthAdjust="spacingAndGlyphs">BASE</text>
<text x="76.25" y="400.75" font-size="13.9" textLength="147.5" lengthAdjust="spacingAndGlyphs">Contingencias comunes</text><text x="224.55" y="400.75" font-size="13.9" textLength="328.45" lengthAdjust="spacingAndGlyphs">………………………………………………………………</text>
<text x="76.25" y="427.5" font-size="13.9" textLength="69.25" lengthAdjust="spacingAndGlyphs">Desempleo</text><text x="146.3" y="427.5" font-size="13.9" textLength="420.7" lengthAdjust="spacingAndGlyphs">………………………………………………………………………………</text>
<text x="76.25" y="453.75" font-size="13.9" textLength="135" lengthAdjust="spacingAndGlyphs">Formación profesional</text><text x="212.05" y="453.75" font-size="13.9" textLength="347.95" lengthAdjust="spacingAndGlyphs">…………………………………………………………………</text>
<text x="76.25" y="480" font-size="13.9" textLength="129.5" lengthAdjust="spacingAndGlyphs">Horas extraordinarias</text><text x="210.35" y="480" font-size="13.9" textLength="346.65" lengthAdjust="spacingAndGlyphs">…………………………………………………………………</text>
<text x="76.25" y="506.25" font-size="13.9" textLength="227.5" lengthAdjust="spacingAndGlyphs">Horas extraordinarias …fuerza mayor</text><text x="304.55" y="506.25" font-size="13.9" textLength="245.45" lengthAdjust="spacingAndGlyphs">………………………………………………</text>
<text x="77" y="532.5" font-size="15" textLength="167.25" lengthAdjust="spacingAndGlyphs">TOTAL APORTACIONES</text><text x="245.05" y="532.5" font-size="15" textLength="675.95" lengthAdjust="spacingAndGlyphs">………………………………………………………………………………………………………………………</text>
<text x="77.2" y="585" font-size="15.5" textLength="332.8" lengthAdjust="spacingAndGlyphs">2. Impuesto sobre la Renta de las Personas Físicas</text><text x="410.8" y="585" font-size="15.5" textLength="127.2" lengthAdjust="spacingAndGlyphs">……………………..</text>
<text x="77.2" y="611" font-size="15.5" textLength="75.8" lengthAdjust="spacingAndGlyphs">3. Anticipos</text><text x="153.8" y="611" font-size="15.5" textLength="492.9" lengthAdjust="spacingAndGlyphs">………………………………………………………………………………………</text>
<text x="77.2" y="637.2" font-size="15.5" textLength="302.2" lengthAdjust="spacingAndGlyphs">4. Valor de los productos recibidos en especie</text><text x="380.2" y="637.2" font-size="15.5" textLength="266.5" lengthAdjust="spacingAndGlyphs">………………………………………………</text>
<g clip-path="url(#c63)"><text x="77.2" y="663.5" font-size="15.5" textLength="137.5" lengthAdjust="spacingAndGlyphs">5. Otras deducciones</text></g>
<text x="589.7" y="401.5" font-size="16" textLength="41.55" lengthAdjust="spacingAndGlyphs">4,70%</text>
<text x="696" y="401.5" font-size="16" textLength="68.7" lengthAdjust="spacingAndGlyphs">1.695,00 €</text>
<text x="847.5" y="401.5" font-size="16" textLength="49" lengthAdjust="spacingAndGlyphs">79,67 €</text>
<text x="590.3" y="428" font-size="16" textLength="40.95" lengthAdjust="spacingAndGlyphs">1,55%</text>
<text x="696" y="428" font-size="16" textLength="68.7" lengthAdjust="spacingAndGlyphs">1.790,00 €</text>
<text x="847.5" y="428" font-size="16" textLength="49" lengthAdjust="spacingAndGlyphs">27,75 €</text>
<text x="589.7" y="454.4" font-size="16" textLength="41.55" lengthAdjust="spacingAndGlyphs">0,10%</text>
<text x="696" y="454.4" font-size="16" textLength="68.7" lengthAdjust="spacingAndGlyphs">1.790,00 €</text>
<text x="853.75" y="454.4" font-size="16" textLength="39.05" lengthAdjust="spacingAndGlyphs">1,79 €</text>
<text x="589.7" y="480.3" font-size="16" textLength="41.55" lengthAdjust="spacingAndGlyphs">4,70%</text>
<text x="705.3" y="480.3" font-size="16" textLength="49.1" lengthAdjust="spacingAndGlyphs">95,00 €</text>
<text x="852" y="480.3" font-size="16" textLength="40.8" lengthAdjust="spacingAndGlyphs">4,47 €</text>
<text x="852" y="506.9" font-size="16" textLength="40.8" lengthAdjust="spacingAndGlyphs">0,00 €</text>
<text x="1010" y="532.5" font-size="15" textLength="56" lengthAdjust="spacingAndGlyphs">113,67 €</text>
<text x="586.7" y="585" font-size="15.7" textLength="49.3" lengthAdjust="spacingAndGlyphs">15,00%</text>
<text x="694.5" y="585" font-size="15.7" textLength="71.8" lengthAdjust="spacingAndGlyphs">1.790,00 €</text>
<text x="1008.7" y="585" font-size="15.7" textLength="57.6" lengthAdjust="spacingAndGlyphs">268,50 €</text></g>
<rect x="811.7" y="457.2" width="120.8" height="26.4" fill="none" stroke="#217346" stroke-width="2"/>
<rect x="929.4" y="480.9" width="5.2" height="5.2" fill="#217346" stroke="#fff" stroke-width="1"/>
<g stroke-linecap="round"><path d="M992.700 484.600v7.400M989 488.300h7.400" stroke="#000" stroke-width="4.200"/><path d="M992.700 485.400v5.800M989.800 488.300h5.800" stroke="#fff" stroke-width="1.500" stroke-linecap="butt"/></g>
<line x1="7" y1="662.6" x2="306.5" y2="662.6" stroke="#a8a8a8" stroke-width="1"/>
<line x1="515" y1="662.6" x2="1268" y2="662.6" stroke="#a8a8a8" stroke-width="1"/>
</svg></div>
<div id="tabsbar"><svg width="1273" height="26" viewBox="7 663 1273 26" style="position:absolute;left:0;top:0;display:block">
<line x1="7" y1="663.2" x2="306.5" y2="663.2" stroke="#b9b9b9" stroke-width="1"/>
<line x1="515" y1="663.2" x2="1280" y2="663.2" stroke="#b9b9b9" stroke-width="1"/>
<path d="M37 671.400l-3.600 3.800 3.600 3.800z" fill="#c4c4c4"/>
<path d="M59.600 671.200l4.200 4-4.200 4z" fill="#217346"/>
<line x1="101.6" y1="666.5" x2="101.6" y2="683.5" stroke="#b4b4b4" stroke-width="1"/>
<text x="116" y="680" font-size="12" textLength="172.5" lengthAdjust="spacingAndGlyphs" fill="#444">Cálculo nóm  paga extra prorra</text>
<rect x="306.5" y="663" width="208.5" height="22.4" fill="#fff"/>
<line x1="306.5" y1="663.8" x2="306.5" y2="685" stroke="#b9b9b9" stroke-width="1"/>
<line x1="515" y1="663.8" x2="515" y2="685" stroke="#b9b9b9" stroke-width="1"/>
<rect x="306.5" y="684.8" width="208.5" height="2" fill="#217346"/>
<text x="320" y="680" font-size="12" textLength="184" lengthAdjust="spacingAndGlyphs" fill="#217346" font-weight="bold">Nómina con paga extra prorrate</text>
<text x="531" y="680" font-size="12" textLength="166.5" lengthAdjust="spacingAndGlyphs" fill="#444">Nómina con paga extra entera</text>
<text x="718.5" y="680" font-size="12" textLength="10" lengthAdjust="spacingAndGlyphs" fill="#444" font-weight="bold">...</text>
<circle cx="748.500" cy="675.800" r="7" fill="none" stroke="#5a5a5a" stroke-width="1.3"/><path d="M744.700 675.800h7.600M748.500 672v7.600" stroke="#5a5a5a" stroke-width="1.4"/>
<circle cx="776" cy="672.6" r=".8" fill="#9a9a9a"/>
<circle cx="776" cy="676" r=".8" fill="#9a9a9a"/>
<circle cx="776" cy="679.4" r=".8" fill="#9a9a9a"/>
<rect x="791.5" y="669" width="12.5" height="14.4" fill="#fff" stroke="#c2c2c2" stroke-width="1"/>
<path d="M799.600 672.800l-3.200 3.200 3.200 3.200z" fill="#555"/>
<rect x="804" y="669" width="432.5" height="14.4" fill="#fff" stroke="#c2c2c2" stroke-width="1"/>
<rect x="1236.5" y="669" width="17.5" height="14.4" fill="#dcdcdc"/>
<rect x="1254" y="669" width="13.5" height="14.4" fill="#fff" stroke="#c2c2c2" stroke-width="1"/>
<path d="M1259.400 672.800l3.200 3.200-3.200 3.200z" fill="#555"/>
</svg></div>
<div id="statusbar"><svg width="1273" height="13" viewBox="7 689 1273 13" style="position:absolute;left:0;top:0;display:block">
<line x1="7" y1="689.4" x2="1280" y2="689.4" stroke="#d4d4d4" stroke-width="1"/>
<text x="14" y="702.6" font-size="11.4" textLength="22" lengthAdjust="spacingAndGlyphs" fill="#444">Listo</text>
<circle cx="58" cy="696" r="2.600" fill="#777"/><rect x="60.600" y="694.400" width="7.400" height="9" fill="#fff" stroke="#777" stroke-width="1"/><rect x="60.600" y="694.400" width="7.400" height="2" fill="#777"/><path d="M62 698.600h5M62 700.600h5" stroke="#777" stroke-width=".8" stroke-dasharray="1.2 .8"/>
<rect x="1012.5" y="689.8" width="32.5" height="13" fill="#c6c6c6"/>
<g fill="none" stroke="#666" stroke-width="1"><rect x="1023" y="693.600" width="12" height="10"/><path d="M1027 693.600v10M1031 693.600v10M1023 697h12M1023 700.400h12"/></g>
<g fill="none" stroke="#666" stroke-width="1"><rect x="1058" y="693.600" width="12.500" height="10"/><rect x="1061" y="696.400" width="6.500" height="7" stroke-width=".9"/><path d="M1062.500 698.600h3.500M1062.500 700.600h3.500" stroke-width=".8"/></g>
<g fill="none" stroke="#666" stroke-width="1"><rect x="1093" y="693.600" width="13" height="10"/><path d="M1099.500 693.600v6.400h-6.500M1099.500 700h6.500" /></g>
<rect x="1122.4" y="697" width="5.4" height="1.5" fill="#555"/>
<line x1="1132.5" y1="697.6" x2="1225" y2="697.6" stroke="#9a9a9a" stroke-width="1"/>
<line x1="1179" y1="695.4" x2="1179" y2="700" stroke="#9a9a9a" stroke-width="1"/>
<rect x="1147.4" y="692.4" width="3.4" height="10" fill="#666"/>
<path d="M1230.400 697.600h6.600M1233.700 694.400v6.600" fill="none" stroke="#444" stroke-width="1.5"/>
<text x="1252.5" y="702.6" font-size="11.4" textLength="23" lengthAdjust="spacingAndGlyphs" fill="#444">40 %</text>
</svg></div>
</div>
</body></html>
